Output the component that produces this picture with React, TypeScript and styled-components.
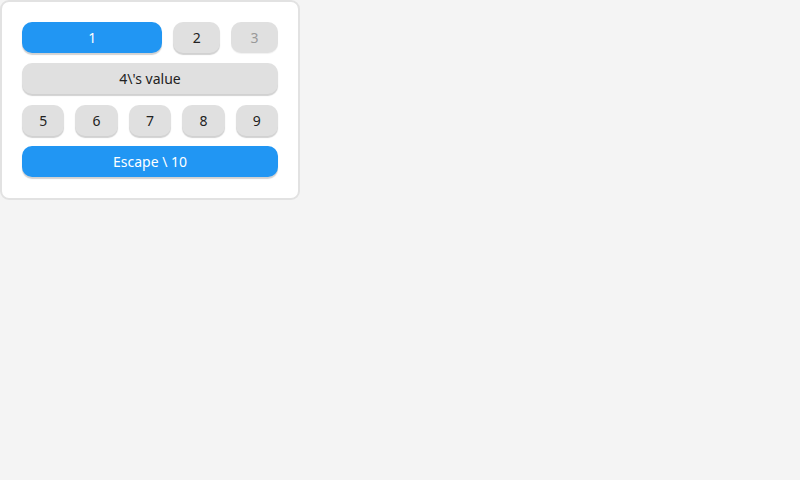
import styled, { createGlobalStyle } from "styled-components";

const GlobalStyle = createGlobalStyle`
  body {
    margin: 0;
    background: #f4f4f4;
    font-family: "Noto Sans", "Open Sans", sans-serif;
  }
`;

const Panel = styled.div`
  box-sizing: border-box;
  width: 300px;
  height: 200px;
  background: #fff;
  border: 2px solid #e2e2e2;
  border-radius: 9px;
  padding: 20px;
  display: flex;
  flex-direction: column;
  gap: 10.3px;
`;

const Row = styled.div<{ $cols: string }>`
  display: grid;
  grid-template-columns: ${(p) => p.$cols};
  column-gap: 11px;
`;

const Button = styled.button<{ $primary?: boolean }>`
  height: 31px;
  border: none;
  border-radius: 10px;
  padding: 0;
  font-family: inherit;
  font-size: 14px;
  color: ${(p) => (p.$primary ? "#fff" : "#222")};
  background: ${(p) => (p.$primary ? "#2196f3" : "#e0e0e0")};
  box-shadow: 0 2px 1px rgba(0, 0, 0, 0.18);
  cursor: pointer;

  &:disabled {
    color: #999;
    box-shadow: 0 1px 1px rgba(0, 0, 0, 0.06);
    cursor: default;
  }
`;

const App = () => {
  return (
    <>
      <GlobalStyle />
      <Panel>
        <Row $cols="3fr 1fr 1fr">
          <Button $primary>1</Button>
          <Button>2</Button>
          <Button disabled>3</Button>
        </Row>
        <Row $cols="1fr">
          <Button>4\'s value</Button>
        </Row>
        <Row $cols="repeat(5, 1fr)">
          {["5", "6", "7", "8", "9"].map((n) => (
            <Button key={n}>{n}</Button>
          ))}
        </Row>
        <Row $cols="1fr">
          <Button $primary>Escape \ 10</Button>
        </Row>
      </Panel>
    </>
  );
};

export default App;
